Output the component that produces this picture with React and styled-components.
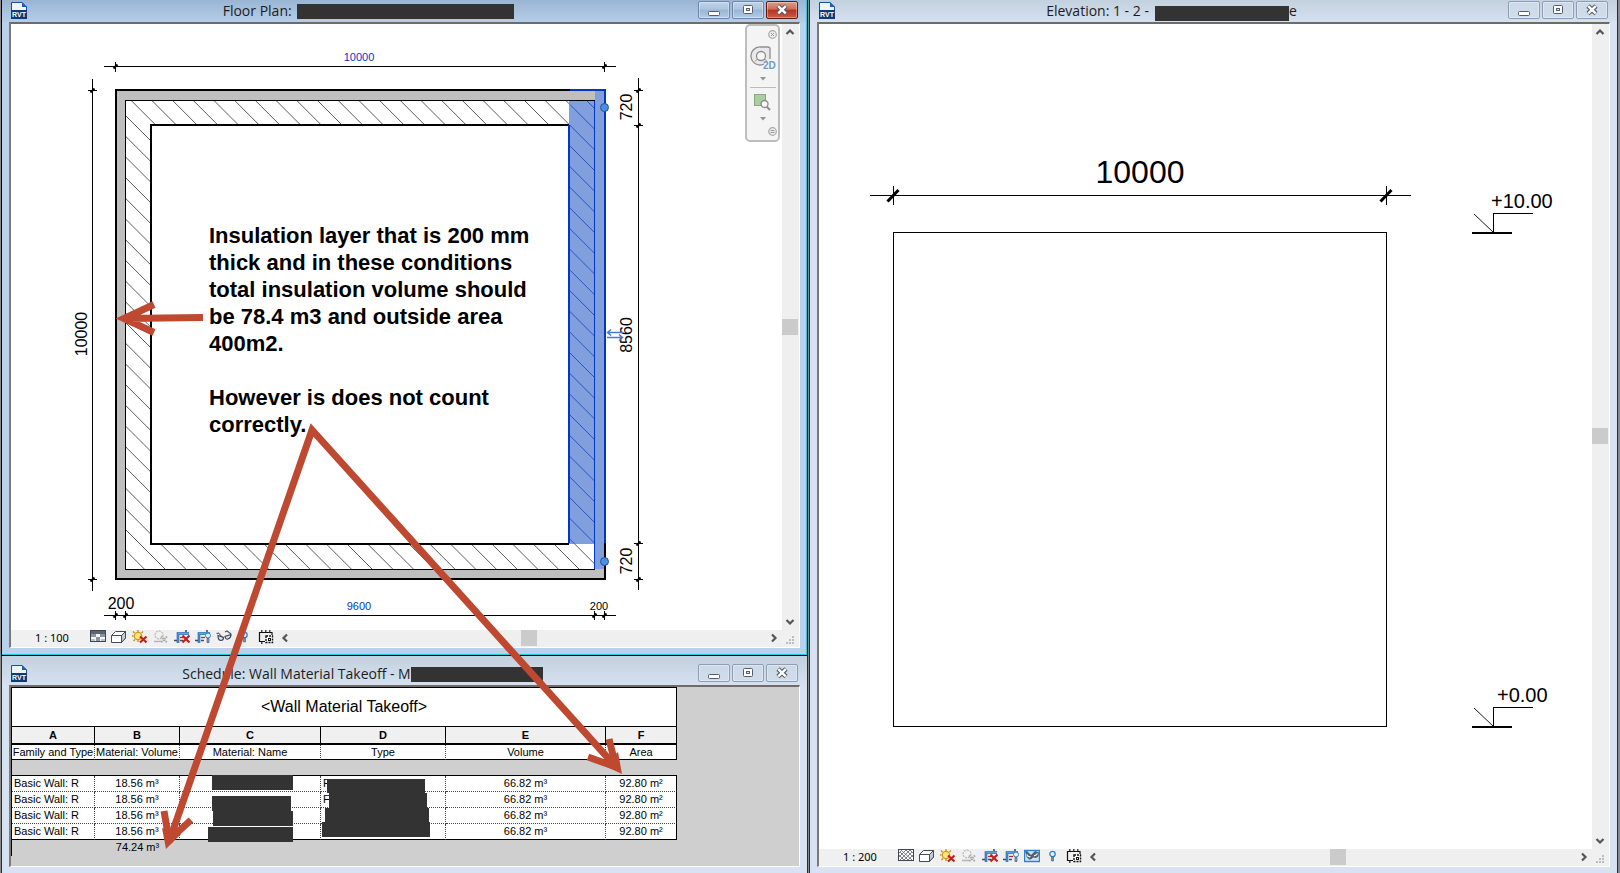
import React from "react";
import styled, { createGlobalStyle } from "styled-components";

const WALL_VOLUMES = [
  { family: "Basic Wall: R", material: "18.56 m³", type: "F", volume: "66.82 m³", area: "92.80 m²" },
  { family: "Basic Wall: R", material: "18.56 m³", type: "F", volume: "66.82 m³", area: "92.80 m²" },
  { family: "Basic Wall: R", material: "18.56 m³", type: "", volume: "66.82 m³", area: "92.80 m²" },
  { family: "Basic Wall: R", material: "18.56 m³", type: "", volume: "66.82 m³", area: "92.80 m²" },
];
const COLUMNS = [
  { letter: "A", name: "Family and Type", width: 83 },
  { letter: "B", name: "Material: Volume", width: 85 },
  { letter: "C", name: "Material: Name", width: 141 },
  { letter: "D", name: "Type", width: 125 },
  { letter: "E", name: "Volume", width: 160 },
  { letter: "F", name: "Area", width: 71 },
];

/* ---------- icons ---------- */

const RvtIcon = () => (
  <svg width="16" height="17" viewBox="0 0 16 17" aria-hidden="true">
    <path d="M0.5 0.5H11L15.5 5V10H0.5Z" fill="#eef4fb" stroke="#1b4f94" />
    <path d="M11 0L16 5H11Z" fill="#1d5fae" />
    <rect y="8" width="16" height="9" fill="#0d3a78" />
    <text x="8" y="15" fontFamily="Liberation Sans, sans-serif" fontWeight="700" fontSize="7" fill="#fff" textAnchor="middle">
      RVT
    </text>
  </svg>
);

const MinimizeIcon = () => (
  <svg width="12" height="12" viewBox="0 0 12 12" aria-hidden="true">
    <rect x="0.5" y="7.5" width="11" height="4" rx="1" fill="#fff" stroke="#585c6c" />
  </svg>
);

const RestoreIcon = () => (
  <svg width="12" height="12" viewBox="0 0 12 12" aria-hidden="true">
    <rect x="1.5" y="1.5" width="9" height="8" rx="1" fill="#fff" stroke="#585c6c" />
    <rect x="4.5" y="4.5" width="3" height="2" fill="#dfe6ee" stroke="#585c6c" />
  </svg>
);

const CloseIcon = () => (
  <svg width="12" height="12" viewBox="0 0 12 12" aria-hidden="true">
    <path d="M2 2L10 9.500M10 2L2 9.500" stroke="#585c6c" strokeWidth="4.600" />
    <path d="M2.300 2.200L9.700 9.300M9.700 2.200L2.300 9.300" stroke="#fff" strokeWidth="2.400" />
  </svg>
);

const CHEVRONS = {
  up: "M1.500 7L5 3.500L8.500 7",
  down: "M1.500 3L5 6.500L8.500 3",
  left: "M7 1.500L3.500 5L7 8.500",
  right: "M3 1.500L6.500 5L3 8.500",
};
const Chevron = ({ to }) => (
  <svg width="10" height="10" viewBox="0 0 10 10" aria-hidden="true">
    <path d={CHEVRONS[to]} fill="none" stroke="#555" strokeWidth="2.200" />
  </svg>
);

const Tool = ({ children }) => (
  <svg width="16" height="14" viewBox="0 0 16 14" aria-hidden="true">
    {children}
  </svg>
);

const CoarseIcon = () => (
  <Tool>
    <rect x="0.5" y="0.500" width="15" height="11" fill="#f4f6f8" stroke="#3f4650" />
    <path d="M1 4h5v3H1zM10 4h5v3h-5zM6 7h4v4H6z" fill="#8b939e" />
    <path d="M1 1h14v3H1z" fill="#5d6570" />
    <path d="M1 9h4v2H1zM11 9h4v2h-4z" fill="#b9c0c8" />
  </Tool>
);
const MeshIcon = () => (
  <Tool>
    <rect x="0.5" y="0.500" width="15" height="11" fill="#fff" stroke="#3f4650" />
    <path d="M2 3L10 11M3 1L14 11M8 1L15 8M12 1L15 4M1 6L6 11M14 3L6 11M12 1L2 11M8 1L1 8M15 6L10 11M4 1L1 4" stroke="#6c737c" strokeWidth="0.900" />
  </Tool>
);
const BoxIcon = () => (
  <Tool>
    <path d="M0.500 5.500L4.500 1.500H14.500V8L10.500 12.500H0.500Z" fill="#fff" stroke="#474d57" />
    <path d="M10.500 5.500L14.500 1.500V8L10.500 12.500Z" fill="#c5cbd3" stroke="#474d57" />
    <path d="M0.500 5.500H10.500V12.500" fill="none" stroke="#474d57" />
  </Tool>
);
const SunIcon = () => (
  <Tool>
    <path d="M6 0V2M1 1.500L2.500 3M0 6H1.500M1.500 11L3 9.500M11 1.500L9.500 3M6 10V12" stroke="#c58b16" strokeWidth="1.300" />
    <circle cx="6" cy="6" r="3.700" fill="#ffe77a" stroke="#d29a1c" strokeWidth="1.300" />
    <path d="M8 6.500L14.500 12.500M14.500 6.500L8 12.500" stroke="#c3201c" strokeWidth="2.200" />
  </Tool>
);
const ShadowIcon = () => (
  <Tool>
    <circle cx="6" cy="5" r="4" fill="none" stroke="#a5a5a5" strokeDasharray="2 1" />
    <path d="M1 11.500H8" stroke="#b5b5b5" strokeWidth="1.500" />
    <path d="M8 6.500L14 12.500M14 6.500L8 12.500" stroke="#aaa" strokeWidth="2" strokeDasharray="1.500 0.700" />
  </Tool>
);
const CropIcon = ({ off }) => (
  <Tool>
    <path d="M4 13V3.500H15" fill="none" stroke="#1b62b5" strokeWidth="2.600" />
    <path d="M4 13V3.500H15" fill="none" stroke="#79b0ea" strokeWidth="0.800" />
    <path d="M0 10.500H3M6 10.500H9M12 0V2" stroke="#454b55" strokeWidth="1.600" />
    <path d="M6 7.500H10" stroke="#d02020" strokeWidth="1.300" />
    {off ? (
      <path d="M8.500 5.500L15.500 12.500M15.500 5.500L8.500 12.500" stroke="#c3201c" strokeWidth="2.200" />
    ) : (
      <>
        <circle cx="13" cy="5.500" r="2.500" fill="#e6f3ff" stroke="#2b7fd6" />
        <path d="M12 8.500V12.500H14V8.500Z" fill="#8aa0b8" stroke="#3d5f86" strokeWidth="0.700" />
      </>
    )}
  </Tool>
);
const GlassesIcon = () => (
  <Tool>
    <path d="M0.500 3.500L2.500 3L7 8M9 2L11 1L15 4" fill="none" stroke="#4a5461" strokeWidth="1.100" />
    <path d="M2 5.500Q2 10.500 5 10.500Q7.500 10.500 7.500 7.500ZM9 6.500Q9.500 9.500 12 9Q15 8 15 4.500Z" fill="#dbe9f4" stroke="#3d4854" strokeWidth="1.200" />
  </Tool>
);
const GlassesFrameIcon = () => (
  <Tool>
    <rect x="0.5" y="1.500" width="15" height="11" fill="#cfe3f7" stroke="#2b7fd6" strokeWidth="1.400" />
    <path d="M1 2.500L3 2L7 6L11 2L15 3.500Q15 8.500 11.500 9L9 8.500Q7 11.500 4.500 10Q2 8.500 2 5Z" fill="#50606c" />
    <path d="M3 5.500Q4 8.500 6.500 7.500M10 6.500Q12 7 13.500 4.500" fill="none" stroke="#e6eef5" strokeWidth="1.300" />
  </Tool>
);
const BulbIcon = () => (
  <Tool>
    <circle cx="7.500" cy="5" r="2.700" fill="#e6f3ff" stroke="#2b7fd6" strokeWidth="1.300" />
    <path d="M6.500 8H8.500V12H6.500Z" fill="#6f8fb0" stroke="#3d5f86" strokeWidth="0.600" />
  </Tool>
);
const ConstraintIcon = () => (
  <Tool>
    <path d="M1.500 2V11.500H7M1 2.500H14V5" fill="none" stroke="#111" strokeWidth="1.200" />
    <path d="M3 1H4.500M7 1H8.500M11 1H12.500M3 13H4.500" stroke="#111" strokeWidth="1.400" />
    <rect x="8" y="6" width="6.500" height="6.500" fill="#fff" stroke="#111" strokeWidth="1.400" strokeDasharray="2 1" />
    <rect x="10.500" y="8.500" width="2" height="2" fill="none" stroke="#111" />
  </Tool>
);

const GripIcon = () => (
  <svg width="9" height="9" viewBox="0 0 9 9" fill="#bdbdbd" aria-hidden="true">
    <path d="M6 0h2v2H6zM3 3h2v2H3zM6 3h2v2H6zM0 6h2v2H0zM3 6h2v2H3zM6 6h2v2H6z" />
  </svg>
);

const WheelIcon = () => (
  <svg width="26" height="26" viewBox="0 0 26 26" aria-hidden="true">
    <path d="M20 14V4Q20 2 18 2H11A9 9 0 1 0 14 19" fill="#e9e9ea" stroke="#8e8e92" strokeWidth="1.300" />
    <circle cx="11" cy="11" r="4.500" fill="#f6f6f6" stroke="#8e8e92" strokeWidth="1.300" />
    <path d="M7.500 14L5 16.500M14.500 14L17 16.500" stroke="#8e8e92" />
    <text x="13" y="24" fontFamily="Liberation Sans, sans-serif" fontSize="10" fontWeight="700" fill="#6d9cc7">
      2D
    </text>
  </svg>
);
const ZoomIcon = () => (
  <svg width="18" height="17" viewBox="0 0 18 17" aria-hidden="true">
    <rect x="0.5" y="0.5" width="11" height="11" fill="#a9cfa0" stroke="#86aa7e" />
    <path d="M12.500 12.500L16 16" stroke="#8b8b8b" strokeWidth="2" />
    <circle cx="10.500" cy="10" r="3.500" fill="#f7f7f7" stroke="#8b8b8b" strokeWidth="1.300" />
  </svg>
);
const CaretIcon = () => (
  <svg width="6" height="4" viewBox="0 0 6 4" aria-hidden="true">
    <path d="M0 0H6L3 3.500Z" fill="#949494" />
  </svg>
);
const RoundIcon = ({ minus }) => (
  <svg width="9" height="9" viewBox="0 0 9 9" aria-hidden="true">
    <circle cx="4.500" cy="4.500" r="3.800" fill="#eee" stroke="#a9a9a9" strokeWidth="1.200" />
    <path d={minus ? "M2.500 3.500H6.500M2.500 5.500H6.500" : "M3 3L6 6M6 3L3 6"} stroke="#999" />
  </svg>
);

/* ---------- window chrome ---------- */

const TitleBar = ({ children, active, tall, indent }) => (
  <Bar $active={active} $tall={tall}>
    <RvtIcon />
    <Caption $indent={indent}>{children}</Caption>
    <Buttons>
      <WindowButton aria-label="Minimize" $active={active}>
        <MinimizeIcon />
      </WindowButton>
      <WindowButton aria-label="Restore" $active={active}>
        <RestoreIcon />
      </WindowButton>
      <WindowButton aria-label="Close" $active={active} $close={active}>
        <CloseIcon />
      </WindowButton>
    </Buttons>
  </Bar>
);

const Scroller = ({ vertical }) => (
  <ScrollBar $vertical={vertical}>
    <ScrollButton aria-label={vertical ? "Scroll up" : "Scroll left"}>
      <Chevron to={vertical ? "up" : "left"} />
    </ScrollButton>
    <Track>
      <Thumb />
    </Track>
    <ScrollButton aria-label={vertical ? "Scroll down" : "Scroll right"}>
      <Chevron to={vertical ? "down" : "right"} />
    </ScrollButton>
  </ScrollBar>
);

const ViewControls = ({ scale, mesh, framed }) => (
  <StatusBar>
    <Tools>
      <ScaleButton>{scale}</ScaleButton>
      <ToolButton aria-label="Detail level">{mesh ? <MeshIcon /> : <CoarseIcon />}</ToolButton>
      <ToolButton aria-label="Visual style"><BoxIcon /></ToolButton>
      <ToolButton aria-label="Sun path"><SunIcon /></ToolButton>
      <ToolButton aria-label="Shadows"><ShadowIcon /></ToolButton>
      <ToolButton aria-label="Crop view"><CropIcon off /></ToolButton>
      <ToolButton aria-label="Show crop region"><CropIcon /></ToolButton>
      <ToolButton aria-label="Temporary hide">{framed ? <GlassesFrameIcon /> : <GlassesIcon />}</ToolButton>
      <ToolButton aria-label="Reveal hidden"><BulbIcon /></ToolButton>
      <ToolButton aria-label="Reveal constraints"><ConstraintIcon /></ToolButton>
    </Tools>
    <Scroller />
    <Corner>
      <GripIcon />
    </Corner>
  </StatusBar>
);

/* ---------- drawings ---------- */

// 45 degree hatch, one line every 20.7 units
const hatch = [];
for (let i = -24; i < 24; i++) {
  hatch.push(-10 + i * 20.7);
}
const Hatch = ({ color, clip }) => (
  <g clipPath={`url(#${clip})`} stroke={color} strokeWidth="0.900" shapeRendering="auto">
    {hatch.map((c) => (
      <line key={c} x1="100" y1={100 + c} x2="620" y2={620 + c} />
    ))}
  </g>
);

const Tick = ({ x, y }) => (
  <path d={`M${x - 2} ${y + 2}L${x + 2} ${y - 2}`} stroke="#000" strokeWidth="2" shapeRendering="auto" />
);

const FloorPlanDrawing = () => (
  <Drawing width="771" height="606" viewBox="11 24 771 606">
    <defs>
      <clipPath id="walls">
        <path clipRule="evenodd" d="M126 101H594V569H126ZM152 126V543H568V126Z" />
      </clipPath>
      <clipPath id="picked">
        <rect x="570" y="101" width="24" height="443" />
      </clipPath>
    </defs>
    <path fillRule="evenodd" fill="#bfbfbf" d="M116 90H605V579H116ZM126 101V569H594V101Z" />
    <Hatch color="#4a4a4a" clip="walls" />
    <rect x="569" y="101" width="26" height="443" fill="#829fdd" />
    <rect x="595" y="91" width="10" height="478" fill="#829fdd" />
    <Hatch color="#1a4cc8" clip="picked" />
    <g fill="none" stroke="#000">
      <rect x="125.500" y="100.500" width="469" height="469" />
      <rect x="116" y="90" width="489" height="489" strokeWidth="2" />
      <path d="M569 125H151V544H569" strokeWidth="2" />
    </g>
    <g fill="none" stroke="#0038c4">
      <path d="M570 90H605V543M569 125V543" strokeWidth="2" />
      <path d="M594.500 101V569" />
    </g>
    <g stroke="#000">
      <path d="M104 66.500H616M115.500 62V72M604.500 62V72" />
      <path d="M92.500 79V591M88 90.500H97M88 579.500H97" />
      <path d="M104 615.500H616M115.500 611V620M125.500 611V620M594.500 611V620M604.500 611V620" />
      <path d="M638.500 78V590M634 90.500H643M634 125.500H643M634 543.500H643M634 579.500H643" />
    </g>
    <Tick x={115.5} y={66.5} />
    <Tick x={604.5} y={66.5} />
    <Tick x={92.5} y={90.5} />
    <Tick x={92.5} y={579.5} />
    <Tick x={115.5} y={615.5} />
    <Tick x={125.5} y={615.5} />
    <Tick x={594.5} y={615.5} />
    <Tick x={604.5} y={615.5} />
    <Tick x={638.5} y={90.5} />
    <Tick x={638.5} y={125.5} />
    <Tick x={638.5} y={543.5} />
    <Tick x={638.5} y={579.5} />
    <g fontSize="11" textAnchor="middle">
      <text x="359" y="61" fill="#0038c4">10000</text>
      <text x="359" y="610" fill="#0038c4">9600</text>
      <text x="599" y="610">200</text>
    </g>
    <g fontSize="16" textAnchor="middle">
      <text x="121" y="609">200</text>
      <text transform="translate(87 334) rotate(-90)">10000</text>
      <text transform="translate(632 107) rotate(-90)">720</text>
      <text transform="translate(632 335) rotate(-90)">8560</text>
      <text transform="translate(632 561) rotate(-90)">720</text>
    </g>
    <g fill="#4a8fe6" stroke="#27508f" shapeRendering="auto">
      <circle cx="604.500" cy="107.500" r="4" />
      <circle cx="604.500" cy="561.500" r="4" />
    </g>
    <path
      d="M623 332.500H608M611 329.500L607.500 332.500L611 335.500M607 337.500H622M619 334.500L622.500 337.500L619 340.500"
      fill="none"
      stroke="#4a78d8"
      strokeWidth="1.500"
      shapeRendering="auto"
    />
  </Drawing>
);

const LevelMark = ({ y, label, x }) => (
  <g fill="none" stroke="#000">
    <path d={`M1493.500 ${y + 19}V${y + 0.5}H1533`} />
    <path d={`M1474 ${y + 1}L1493 ${y + 19}`} shapeRendering="auto" strokeWidth="0.900" />
    <path d={`M1472 ${y + 20}H1512`} strokeWidth="2" />
    <text x={x} y={y - 5} fontSize="20" fill="#000" stroke="none">
      {label}
    </text>
  </g>
);

const ElevationDrawing = () => (
  <Drawing width="773" height="825" viewBox="819 24 773 825">
    <g fill="none" stroke="#000">
      <path d="M870 195.500H1411M893.500 186V205M1386.500 186V205" />
      <path d="M887.500 201.500L898.500 190M1380.500 201.500L1391.500 190" strokeWidth="3" shapeRendering="auto" />
      <rect x="893.500" y="232.500" width="493" height="494" />
    </g>
    <text x="1140" y="183" fontSize="32" textAnchor="middle">
      10000
    </text>
    <LevelMark y={213} x={1491} label="+10.00" />
    <LevelMark y={707} x={1497} label="+0.00" />
  </Drawing>
);

const Markup = () => (
  <MarkupLayer width="1620" height="873" viewBox="0 0 1620 873" aria-hidden="true">
    <g fill="#333">
      <path d="M212 775H293V790H212ZM212 796H291V811H293V826H213V811H212ZM208 827H293V842H208Z" />
      <path d="M327 779H425V793H427V808H429V822H430V837H322V822H325V808H329V793H327Z" />
    </g>
    <g fill="none" stroke="#bf4930" strokeWidth="7">
      <path d="M203 317.500L124 318.500M154 304.500L124 318.500L154 332.500" />
      <path d="M169 842L312 430L617 768" />
      <path d="M164 811L169 840L191 820" />
      <path d="M609 739L616 767L588 757" />
    </g>
    <g fill="#bf4930">
      <path d="M117 318.500L133 311V326Z" />
      <path d="M166 849L162 828L181 834Z" />
      <path d="M622 774L603 765L618 752Z" />
    </g>
  </MarkupLayer>
);

/* ---------- windows ---------- */

const FloorPlan = () => (
  <FloorWindow>
    <TitleBar active indent={12}>
      Floor Plan: <Redacted $width={217} />
    </TitleBar>
    <Content>
      <View>
        <Canvas>
          <FloorPlanDrawing />
          <Note>
            <p>
              Insulation layer that is 200 mm
              <br />
              thick and in these conditions
              <br />
              total insulation volume should
              <br />
              be 78.4 m3 and outside area
              <br />
              400m2.
            </p>
            <p>
              However is does not count
              <br />
              correctly.
            </p>
          </Note>
          <NavBar>
            <NavButton aria-label="Close" $end><RoundIcon /></NavButton>
            <NavButton aria-label="Steering wheel"><WheelIcon /></NavButton>
            <NavButton aria-label="Wheel options"><CaretIcon /></NavButton>
            <NavRule />
            <NavButton aria-label="Zoom"><ZoomIcon /></NavButton>
            <NavButton aria-label="Zoom options"><CaretIcon /></NavButton>
            <NavButton aria-label="Customize" $end><RoundIcon minus /></NavButton>
          </NavBar>
        </Canvas>
        <Scroller vertical />
      </View>
      <ViewControls scale="1 : 100" />
    </Content>
  </FloorWindow>
);

const Schedule = () => (
  <ScheduleWindow>
    <TitleBar tall>
      Schedule: Wall Material Takeoff - M<Redacted $width={132} $gap={0} />
    </TitleBar>
    <Content>
      <Sheet>
        <Table>
          <colgroup>
            {COLUMNS.map((col) => (
              <col key={col.letter} width={col.width} />
            ))}
          </colgroup>
          <thead>
            <tr>
              <SheetTitle colSpan={6}>&lt;Wall Material Takeoff&gt;</SheetTitle>
            </tr>
            <tr>
              {COLUMNS.map((col) => (
                <Letter key={col.letter}>{col.letter}</Letter>
              ))}
            </tr>
            <tr>
              {COLUMNS.map((col) => (
                <Heading key={col.letter}>{col.name}</Heading>
              ))}
            </tr>
          </thead>
          <tbody>
            <tr>
              <Gap colSpan={6} />
            </tr>
            {WALL_VOLUMES.map((row, i) => (
              <Row key={i}>
                <Cell $left>{row.family}</Cell>
                <Cell>{row.material}</Cell>
                <Cell />
                <Cell $left>{row.type}</Cell>
                <Cell>{row.volume}</Cell>
                <Cell>{row.area}</Cell>
              </Row>
            ))}
          </tbody>
          <tfoot>
            <tr>
              <Total />
              <Total>74.24 m³</Total>
              <Total colSpan={4} />
            </tr>
          </tfoot>
        </Table>
      </Sheet>
    </Content>
  </ScheduleWindow>
);

const Elevation = () => (
  <ElevationWindow>
    <TitleBar>
      Elevation: 1 - 2 -<Redacted $width={134} $gap={6} $lower />e
    </TitleBar>
    <Content>
      <View>
        <Canvas>
          <ElevationDrawing />
        </Canvas>
        <Scroller vertical />
      </View>
      <ViewControls scale="1 : 200" mesh framed />
    </Content>
  </ElevationWindow>
);

const App = () => (
  <Desktop>
    <GlobalStyle />
    <LeftColumn>
      <FloorPlan />
      <Schedule />
    </LeftColumn>
    <Elevation />
    <Markup />
  </Desktop>
);

export default App;

const GlobalStyle = createGlobalStyle`
  * {
    box-sizing: border-box;
  }
  body {
    margin: 0;
    font-family: "Liberation Sans", Arial, sans-serif;
    color: #000;
  }
  button {
    display: flex;
    align-items: center;
    justify-content: center;
    margin: 0;
    padding: 0;
    border: none;
    background: none;
    color: inherit;
  }
  svg {
    display: block;
    flex: none;
  }
`;
const Desktop = styled.main`
  position: relative;
  display: grid;
  grid-template-columns: 808fr 811fr;
  gap: 1px;
  min-height: 100vh;
  background: #8a8a8a;
  overflow: hidden;
`;
const LeftColumn = styled.div`
  display: flex;
  flex-direction: column;
  min-width: 0;
  padding-left: 1px;
`;
const Frame = styled.section`
  display: flex;
  flex-direction: column;
  min-width: 0;
  padding: 0 7px 6px;
  background: #d7e3f2;
  border: solid #2b2b2b;
  border-width: 0 1px;
`;
const FloorWindow = styled(Frame)`
  flex: 1;
  padding-bottom: 7px;
  background: #b9d1ea;
  border-color: #000;
  border-bottom-width: 1px;
  box-shadow: inset -1px -1px 0 #1fc8e3;
`;
const ScheduleWindow = styled(Frame)``;
const ElevationWindow = styled(Frame)`
  margin-right: 2px;
`;
const Bar = styled.header`
  display: flex;
  align-items: center;
  margin: 0 -7px;
  padding: ${(props) => (props.$tall ? "8px 9px 3px" : "1px 9px 3px")};
  background: ${(props) =>
    props.$active
      ? "linear-gradient(#9ab5d3, #b5cde8)"
      : "linear-gradient(#c3d0de, #d5e1f0)"};
  /* keep the frame highlight on the right edge of the active window */
  border-right: ${(props) => (props.$active ? "1px solid #1fc8e3" : "none")};
  padding-right: ${(props) => (props.$active ? 8 : 9)}px;
`;
const Caption = styled.h1`
  flex: 1;
  display: flex;
  align-items: center;
  justify-content: center;
  height: 18px;
  margin: 0;
  padding-top: 2px;
  padding-left: ${(props) => props.$indent || 0}px;
  font: 400 14px/16px "Open Sans", "Noto Sans", sans-serif;
  color: #1c1c1c;
  white-space: pre;
`;
const Redacted = styled.span`
  width: ${(props) => props.$width}px;
  height: 15px;
  margin-left: ${(props) => props.$gap ?? 2}px;
  margin-top: ${(props) => (props.$lower ? 4 : 0)}px;
  background: #333;
`;
const Buttons = styled.div`
  display: flex;
  gap: 2px;
`;
const WindowButton = styled.button`
  width: 32px;
  height: 18px;
  && {
    border: 1px solid ${(props) => (props.$close ? "#5c1a17" : props.$active ? "#6f87a5" : "#8c9db5")};
    border-radius: 2px;
    background: ${(props) =>
      props.$close
        ? "linear-gradient(#e09a8c, #cf6d5a 45%, #b93320 50%, #cc5c3e)"
        : props.$active
          ? "linear-gradient(#bfd2e8, #adc5e0 45%, #9ab6d6 50%, #b3cbe6)"
          : "linear-gradient(#ccd9e7, #cfdcea)"};
    box-shadow: inset 0 0 0 1px rgba(255, 255, 255, 0.35);
  }
`;
const Content = styled.div`
  flex: 1;
  display: flex;
  flex-direction: column;
  min-width: 0;
  border: solid;
  border-width: 2px 1px 1px 2px;
  border-color: #6f6b68 #fff #fff #7d7976;
`;
const View = styled.div`
  flex: 1;
  display: flex;
  min-height: 0;
  background: #fff;
`;
const Canvas = styled.div`
  position: relative;
  flex: 1;
  min-width: 0;
  overflow: hidden;
`;
const Drawing = styled.svg`
  font-family: "Liberation Sans", Arial, sans-serif;
  shape-rendering: crispEdges;
`;
const Note = styled.div`
  position: absolute;
  left: 198px;
  top: 198px;
  font-size: 22px;
  font-weight: 700;
  line-height: 27px;
  white-space: nowrap;
  p {
    margin: 0 0 27px;
  }
`;
const NavBar = styled.nav`
  position: absolute;
  top: 0;
  right: 2px;
  display: flex;
  flex-direction: column;
  align-items: center;
  gap: 6px;
  width: 35px;
  padding: 4px 0;
  background: #f4f4f4;
  border: 2px solid #bdbdbd;
  border-radius: 5px;
`;
const NavButton = styled.button`
  align-self: ${(props) => (props.$end ? "flex-end" : "center")};
  && {
    margin-right: ${(props) => (props.$end ? 1 : 0)}px;
  }
`;
const NavRule = styled.div`
  width: 26px;
  height: 1px;
  background: #bcbcbc;
`;
const ScrollBar = styled.div`
  display: flex;
  flex-direction: ${(props) => (props.$vertical ? "column" : "row")};
  flex: ${(props) => (props.$vertical ? "0 0 17px" : "1")};
  background: #efefef;
`;
const ScrollButton = styled.button`
  width: 16px;
  height: 16px;
`;
const Track = styled.div`
  flex: 1;
  display: flex;
  align-items: center;
  justify-content: center;
`;
const Thumb = styled.div`
  width: 17px;
  height: 17px;
  background: #cbcbcb;
  background-clip: content-box;
  padding: 0 1px 1px 0;
`;
const StatusBar = styled.footer`
  display: flex;
  height: 17px;
  background: #f0f0f0;
`;
const Tools = styled.div`
  display: flex;
  align-items: flex-start;
  gap: 5px;
  padding-right: 3px;
`;
const ScaleButton = styled.button`
  width: 74px;
  height: 16px;
  && {
    justify-content: flex-start;
    padding-left: 24px;
    font: 11px/16px "Noto Sans", sans-serif;
    white-space: nowrap;
  }
`;
const ToolButton = styled.button`
  width: 16px;
  height: 14px;
`;
const Corner = styled.div`
  display: flex;
  align-items: flex-end;
  justify-content: center;
  width: 17px;
  padding-bottom: 2px;
`;
const Sheet = styled.div`
  flex: 1;
  padding-bottom: 10px;
  background: #cfcfcf;
`;
const Table = styled.table`
  width: 666px;
  table-layout: fixed;
  border-collapse: separate;
  border-spacing: 0;
  border-left: 1px solid #000;
  font-size: 11px;
  line-height: 14px;
  text-align: center;
  white-space: nowrap;
`;
const SheetTitle = styled.th`
  height: 40px;
  padding: 0;
  background: #fff;
  border: solid #000;
  border-width: 1px 1px 1px 0;
  font-size: 16px;
  font-weight: 400;
`;
const Letter = styled.th`
  height: 18px;
  padding: 0;
  background: #f0f0f0;
  border-right: 1px solid #000;
  border-bottom: 2px solid #000;
`;
const Heading = styled.th`
  height: 15px;
  padding: 0;
  background: #fff;
  border-right: 1px dotted #444;
  border-bottom: 1px solid #000;
  font-weight: 400;
  &:last-child {
    border-right: 1px solid #000;
  }
`;
const Gap = styled.td`
  height: 16px;
  padding: 0;
  border-bottom: 1px solid #000;
`;
const Cell = styled.td`
  height: 16px;
  padding: 0 2px;
  vertical-align: top;
  background: #fff;
  border-right: 1px dotted #444;
  border-bottom: 1px dotted #444;
  text-align: ${(props) => (props.$left ? "left" : "center")};
  &:last-child {
    border-right: 1px solid #000;
  }
`;
const Row = styled.tr`
  &:last-child ${Cell} {
    border-bottom: 1px solid #000;
  }
`;
const Total = styled.td`
  height: 16px;
  padding: 0;
  vertical-align: top;
`;
const MarkupLayer = styled.svg`
  position: absolute;
  top: 0;
  left: 0;
  pointer-events: none;
`;
